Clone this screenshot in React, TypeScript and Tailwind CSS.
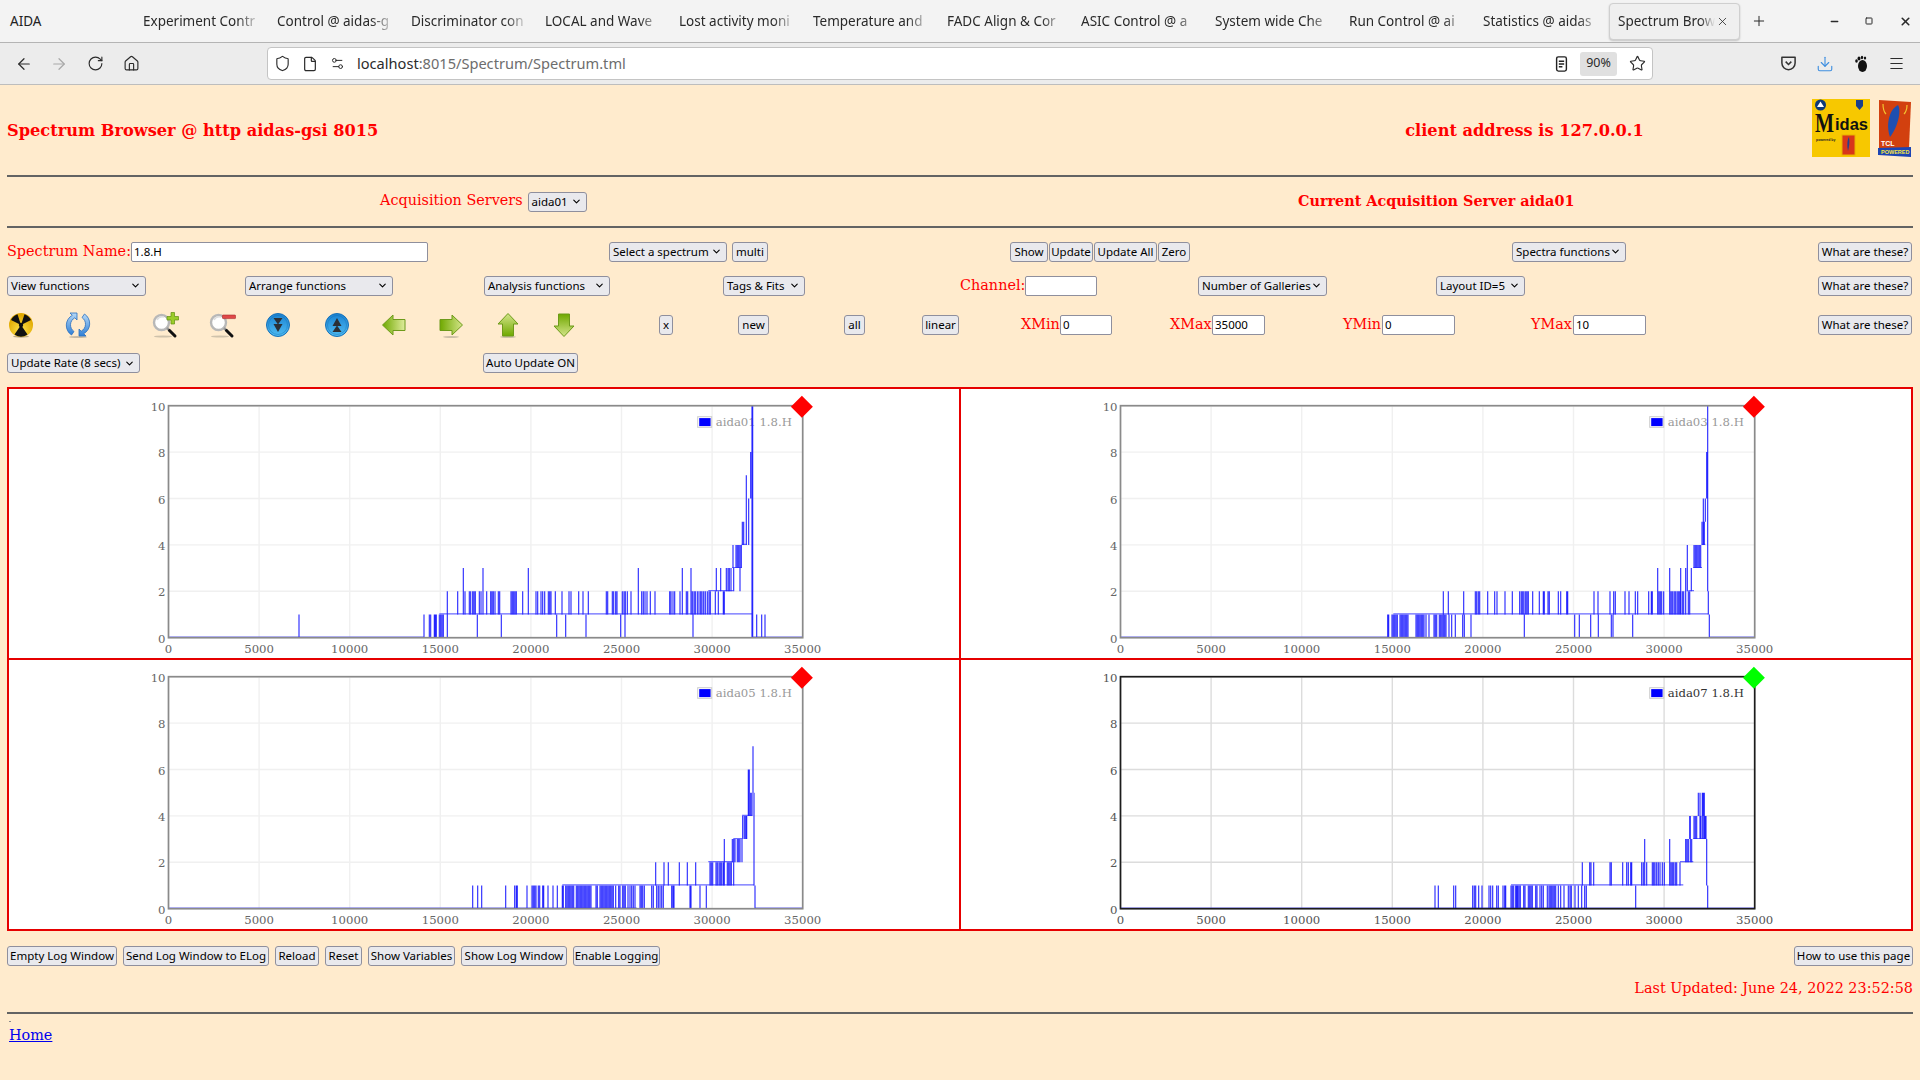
import { ArrowLeft, ArrowRight, ChevronDown, Download, File, Home, Menu, Minus, Plus, RotateCw, Settings2, Shield, Square, Star, X } from 'lucide-react';
import type { ReactNode } from 'react';

const tabs = [
  'Experiment Contr',
  'Control @ aidas-g',
  'Discriminator con',
  'LOCAL and Wave',
  'Lost activity moni',
  'Temperature and',
  'FADC Align & Cor',
  'ASIC Control @ a',
  'System wide Che',
  'Run Control @ ai',
  'Statistics @ aidas',
];

// plot box inside a chart cell, px
const PLOT = { left: 159.5, right: 793.7, top: 16.7, bottom: 248.7 };
const ly = (level: number) => PLOT.bottom - level * 23.2;

// [from level, to level, x positions measured off the plot]
type Spikes = [number, number, number[]];
type Series = { name: string; off: number; active?: boolean; base: [number, number, number][]; spikes: Spikes[] };

const charts: Series[] = [
  {
    name: 'aida01 1.8.H',
    off: 391,
    base: [[0, -694, 72], [1, 118, 1058], [2, 925, 1000], [3, 997, 1025], [4, 1025, 1040], [0, 1058, 1208]],
    spikes: [
      [0, 1, [-303, 72, 88, 92, 103, 106, 109, 118, 122, 126, 130, 1070, 1085, 1095]],
      [0, 2, [142]],
      [1, 2, [173, 195, 208, 212, 218, 222, 226, 238, 243, 260, 272, 276, 280, 285, 295, 299, 333, 337, 341, 345, 349, 368, 408, 413, 423, 428, 434, 445, 449, 453, 466, 486, 507, 513, 536, 549, 565, 619, 623, 637, 641, 647, 651, 667, 672, 676, 682, 693, 725, 730, 735, 741, 751, 765, 809, 813, 819, 824, 840, 859, 863, 877, 882, 886, 892, 897, 902, 906, 911, 916, 922, 927, 931, 946, 955, 970, 973]],
      [1, 3, [190, 249, 385, 715, 847, 873]],
      [1, 0, [232, 304, 470, 497, 558, 662, 675, 879]],
      [2, 3, [949, 962, 979, 984, 988, 993, 1001, 1020]],
      [3, 4, [999, 1008, 1012, 1016, 1020, 1024]],
      [4, 5, [1027, 1031]],
      [4, 7, [1039]],
      [4, 6, [1046]],
      [6, 8, [1052]],
      [0, 10, [1056, 1058]],
    ],
  },
  {
    name: 'aida03 1.8.H',
    off: 389,
    base: [[0, -688, 113], [1, 130, 1075], [2, 1015, 1032], [3, 1030, 1056], [4, 1056, 1066], [0, 1078, 1214]],
    spikes: [
      [0, 1, [113, 116, 126, 130, 134, 138, 142, 150, 154, 158, 162, 166, 170, 174, 198, 202, 206, 210, 214, 218, 222, 228, 237, 252, 256, 260, 268, 272, 276, 280, 284, 288, 297, 305, 316, 338, 343, 363, 1078]],
      [1, 0, [523, 674, 688, 722, 745, 784, 789, 848]],
      [1, 2, [280, 295, 341, 376, 380, 385, 389, 413, 434, 441, 465, 487, 509, 514, 518, 522, 527, 531, 535, 548, 568, 580, 583, 594, 598, 625, 632, 650, 653, 732, 744, 780, 791, 796, 825, 837, 856, 863, 896, 904, 907, 927, 931, 935, 941, 963, 967, 972, 976, 981, 985, 989, 997, 1001, 1015, 1019, 1075]],
      [1, 3, [923, 959, 992, 1007]],
      [2, 4, [1012]],
      [2, 3, [1024]],
      [3, 4, [1032, 1036, 1040, 1044, 1048, 1052]],
      [4, 5, [1056, 1060, 1063]],
      [5, 6, [1060, 1066]],
      [6, 8, [1070]],
      [2, 8, [1073]],
      [8, 10, [1073]],
    ],
  },
  {
    name: 'aida05 1.8.H',
    off: 391,
    base: [[0, -694, 710], [1, 487, 1062], [2, 925, 1000], [3, 1000, 1026], [4, 1026, 1056], [0, 1065, 1208]],
    spikes: [
      [0, 1, [218, 233, 245, 317, 344, 349, 352, 381, 396, 400, 404, 408, 415, 419, 428, 431, 444, 459, 472, 487, 490, 497, 501, 505, 509, 513, 517, 521, 529, 533, 537, 541, 545, 549, 553, 557, 561, 565, 569, 573, 588, 592, 600, 604, 608, 612, 616, 620, 624, 628, 632, 636, 640, 647, 656, 660, 668, 672, 676, 684, 690, 695, 700, 705, 720, 724, 728, 733, 755, 760, 770, 775, 780, 785, 790, 815, 819, 822, 870, 873, 900, 919, 1065]],
      [1, 2, [767, 792, 805, 838, 862, 887, 930, 934, 938, 948, 952, 957, 961, 965, 970, 982, 986, 990, 994]],
      [1, 3, [973, 1001]],
      [2, 3, [997, 1005, 1012, 1016, 1020, 1026]],
      [3, 4, [1028, 1033, 1037, 1040]],
      [4, 6, [1045, 1048]],
      [4, 5, [1052, 1056]],
      [5, 7, [1059]],
      [1, 5, [1062]],
    ],
  },
  {
    name: 'aida07 1.8.H',
    off: 389,
    active: true,
    base: [[0, -688, 1214], [1, 483, 1000], [2, 990, 1030], [3, 1030, 1068]],
    spikes: [
      [0, 1, [255, 265, 311, 317, 368, 373, 377, 386, 396, 417, 422, 428, 440, 445, 459, 464, 467, 483, 487, 491, 497, 500, 503, 507, 511, 521, 525, 535, 539, 543, 547, 557, 561, 570, 575, 580, 592, 597, 601, 605, 609, 613, 617, 625, 632, 642, 655, 660, 664, 675, 685, 695, 704, 709, 857, 1073]],
      [1, 2, [697, 719, 723, 731, 780, 784, 818, 830, 835, 842, 845, 875, 880, 890, 907, 911, 915, 920, 925, 930, 937, 943, 963, 967, 971, 976, 980, 990, 1070]],
      [1, 3, [884, 959]],
      [2, 3, [1007, 1011, 1015, 1025]],
      [2, 4, [1021]],
      [3, 4, [1019, 1032, 1036, 1040, 1050, 1053, 1058, 1062, 1065, 1068]],
      [4, 5, [1045, 1050, 1057, 1060, 1063]],
      [3, 1, [1070]],
    ],
  },
];

const Btn = ({ children, className = '' }: { children: ReactNode; className?: string }) => (
  <button className={`h-[20px] shrink-0 rounded-[3px] border border-[#8f8f9d] bg-[#e9e9ed] px-0 text-[11.5px] leading-none whitespace-nowrap text-black [font-family:'Noto_Sans',sans-serif] ${className}`}>
    {children}
  </button>
);

const Sel = ({ label, width }: { label: string; width: string }) => (
  <div className={`flex h-[20px] items-center justify-between rounded-[3px] border border-[#8f8f9d] bg-[#e9e9ed] pr-[4px] pl-[3px] text-[11.5px] whitespace-nowrap text-black [font-family:'Noto_Sans',sans-serif] ${width}`}>
    <span>{label}</span>
    <ChevronDown className="h-[11px] w-[11px] shrink-0" strokeWidth={2.4} />
  </div>
);

const Field = ({ value, width }: { value: string; width: string }) => (
  <div className={`flex h-[20px] items-center rounded-[2px] border border-[#8f8f9d] bg-white px-[2px] text-[11.5px] text-black [font-family:'Noto_Sans',sans-serif] ${width}`}>
    {value}
  </div>
);

const Chart = ({ data }: { data: Series }) => {
  const sx = (z: number) => z / 3 + data.off;
  const frame = data.active ? '#1c1c1c' : '#8a8a8a';
  const grid = data.active ? '#dcdcdc' : '#f0f0f0';
  const tick = data.active ? '#555' : '#666';
  const w = PLOT.right - PLOT.left;
  const xTicks = [0, 5000, 10000, 15000, 20000, 25000, 30000, 35000];
  const yTicks = [0, 2, 4, 6, 8, 10];
  const lines = data.spikes
    .map(([from, to, xs]) => xs.map((z) => `M${sx(z).toFixed(1)} ${ly(from).toFixed(1)}V${ly(to).toFixed(1)}`).join(''))
    .join('');
  const base = data.base
    .map(([l, a, b]) => `M${sx(a).toFixed(1)} ${(ly(l) - 0.6).toFixed(1)}H${Math.min(sx(b), PLOT.right).toFixed(1)}`)
    .join('');
  const px = PLOT.right;
  // marker sits a touch off the plot corner
  const mx = px - 0.8;
  const my = PLOT.top + 1;

  return (
    <div className="h-[271px] border-r-2 border-b-2 border-[#e60000] bg-white">
      <svg width="950" height="269" className="block [font-family:'DejaVu_Serif',serif]">
        {xTicks.map((v) => {
          const x = PLOT.left + (v / 35000) * w;
          return (
            <g key={v}>
              <line x1={x} x2={x} y1={PLOT.top} y2={PLOT.bottom} stroke={grid} strokeWidth="1.4" />
              <text x={x} y={PLOT.bottom + 15} textAnchor="middle" fontSize="11.7" fill={tick}>{v}</text>
            </g>
          );
        })}
        {yTicks.map((v) => (
          <g key={v}>
            <line x1={PLOT.left} x2={PLOT.right} y1={ly(v)} y2={ly(v)} stroke={grid} strokeWidth="1.4" />
            <text x={PLOT.left - 3} y={ly(v) + 5} textAnchor="end" fontSize="11.7" fill={tick}>{v}</text>
          </g>
        ))}
        <rect x={px - 105} y={27.7} width="14" height="10.6" fill="none" stroke="#ccc" />
        <rect x={px - 103.5} y={29.1} width="11.4" height="8" fill="#00f" />
        <text x={px - 87} y={36.5} fontSize="11.7" fill={data.active ? '#333' : '#999'}>{data.name}</text>
        <path d={base} fill="none" stroke="#6a6aff" strokeWidth="1.2" />
        <path d={lines} fill="none" stroke="#2424ff" strokeWidth="1.1" />
        <rect x={PLOT.left} y={PLOT.top} width={w} height={PLOT.bottom - PLOT.top} fill="none" stroke={frame} strokeWidth="1.7" />
        <polygon
          points={`${mx},${my - 11} ${mx + 11},${my} ${mx},${my + 11} ${mx - 11},${my}`}
          fill={data.active ? '#00ff00' : '#ff0000'}
        />
      </svg>
    </div>
  );
};

function MagIcon({ plus }: { plus?: boolean }) {
  return (
    <svg viewBox="0 0 28 28" className="h-7 w-7">
      <ellipse cx="12" cy="25.5" rx="9" ry="1" fill="#cfc2ab" />
      <circle cx="10.5" cy="11.5" r="7.5" fill="#fff" stroke="#b8b8b8" strokeWidth="2.4" />
      <path d="M6 9a6 6 0 0 1 7-3" stroke="#ddd" strokeWidth="1.5" fill="none" />
      <path d="M16 17l3 3" stroke="#999" strokeWidth="2.5" />
      <path d="M18.5 19.5l5.5 5.5" stroke="#111" strokeWidth="3" strokeLinecap="round" />
      {plus ? (
        <path d="M20 1.5h3.5v4h4v3.5h-4v4H20v-4h-4V5.5h4Z" fill="#9ccc2a" stroke="#5f8f10" strokeWidth=".7" />
      ) : (
        <rect x="14.5" y="4" width="13" height="3.6" rx=".6" fill="#e04848" stroke="#a82c2c" strokeWidth=".6" />
      )}
    </svg>
  );
}

function RoundIcon({ id, flip }: { id: string; flip?: boolean }) {
  return (
    <svg viewBox="0 0 28 28" className="h-7 w-7">
      <defs>
        <linearGradient id={id} x1="0" y1="0" x2="0" y2="1"><stop offset="0" stopColor="#1a82d2" /><stop offset="1" stopColor="#4fbcf2" /></linearGradient>
      </defs>
      <circle cx="14" cy="14" r="11.5" fill={`url(#${id})`} stroke="#1670b8" />
      <circle cx="14" cy="14" r="9.5" fill="none" stroke="#0f64a8" strokeWidth=".6" opacity=".6" />
      <g transform={flip ? 'rotate(180 14 14)' : undefined} fill="#2b2f36">
        <path d="M9.5 7h9L14 13.5Z" />
        <path d="M9.5 13h9L14 21Z" />
      </g>
    </svg>
  );
}

function GreenArrow({ id, rotate }: { id: string; rotate: number }) {
  const tipDark = rotate === -90;
  return (
    <svg viewBox="0 0 28 28" className="h-7 w-7">
      <defs>
        <linearGradient id={id} x1="0" y1="0" x2="0" y2="1">
          <stop offset="0" stopColor={tipDark ? '#6fa800' : '#d4e58a'} />
          <stop offset="1" stopColor={tipDark ? '#e0ec9c' : '#6fa800'} />
        </linearGradient>
      </defs>
      <ellipse cx="14" cy="26" rx="8" ry=".9" fill="#cdbfa8" opacity={rotate === 180 || rotate === -90 ? 0 : 1} />
      <g transform={`rotate(${rotate} 14 14)`}>
        <path d="M14 2.5L24 13H19.5V25H8.5V13H4Z" fill={`url(#${id})`} stroke="#6d9a1a" strokeWidth="1" strokeLinejoin="round" />
      </g>
    </svg>
  );
}

const icons: ReactNode[] = [
  // radiation
  <svg key="rad" viewBox="0 0 28 28" className="h-7 w-7">
    <defs>
      <radialGradient id="ry" cx="50%" cy="70%" r="60%"><stop offset="0" stopColor="#ffe24a" /><stop offset="1" stopColor="#e0a800" /></radialGradient>
    </defs>
    <ellipse cx="14" cy="25.5" rx="8" ry="1.2" fill="#b9a98f" />
    <circle cx="14" cy="14" r="12" fill="url(#ry)" />
    <path d="M14 14 L4 9 A11.4 11.4 0 0 1 10.5 3.2Z M14 14 L17.5 3.2 A11.4 11.4 0 0 1 24 9Z M14 14 L20.5 23.4 A11.4 11.4 0 0 1 7.5 23.4Z" fill="#111" />
    <circle cx="14" cy="14" r="2.2" fill="#111" />
  </svg>,
  // refresh
  <svg key="refresh" viewBox="0 0 28 28" className="h-7 w-7">
    <defs>
      <linearGradient id="rb" x1="0" y1="0" x2="0" y2="1"><stop offset="0" stopColor="#b5d8f7" /><stop offset="1" stopColor="#2f7fd6" /></linearGradient>
    </defs>
    <ellipse cx="14" cy="26" rx="9" ry="1" fill="#c9bba4" />
    <path d="M6 2h7v7l-2.2-2.2A8 8 0 0 0 10 20.5L7.5 24A11.500 11.500 0 0 1 8.300 4.300Z" fill="url(#rb)" stroke="#2a6fbe" strokeWidth=".8" />
    <path d="M22 25h-7v-7l2.2 2.2A8 8 0 0 0 18 6.5L20.5 3A11.500 11.500 0 0 1 19.700 22.700Z" fill="url(#rb)" stroke="#2a6fbe" strokeWidth=".8" />
  </svg>,
  <MagIcon key="zin" plus />,
  <MagIcon key="zout" />,
  <RoundIcon key="dn" id="rd" />,
  <RoundIcon key="up" id="ru" flip />,
  <GreenArrow key="l" id="gl" rotate={-90} />,
  <GreenArrow key="r" id="gr" rotate={90} />,
  <GreenArrow key="u" id="gu" rotate={0} />,
  <GreenArrow key="d" id="gd" rotate={180} />,
];

const MidasLogo = () => (
  <svg viewBox="0 0 58 58" className="h-[58px] w-[58px]">
    <rect width="58" height="58" fill="#f7c800" />
    <circle cx="8.5" cy="6" r="5.5" fill="#0d3a78" />
    <path d="M8.5 2.5L12 8H5Z" fill="#fff" />
    <path d="M44 1h7v6l-3.5 4-3.5-4Z" fill="#1a3f8c" />
    <text x="3" y="33" fontSize="28" fontWeight="700" fill="#111" textLength="19" lengthAdjust="spacingAndGlyphs" className="[font-family:'Liberation_Serif',serif]">M</text>
    <text x="23" y="31" fontSize="16" fontWeight="700" fill="#111" textLength="33" lengthAdjust="spacingAndGlyphs" className="[font-family:'Liberation_Sans',sans-serif]">idas</text>
    <text x="4" y="42" fontSize="3.5" fontWeight="700" fill="#222" className="[font-family:'Liberation_Sans',sans-serif]">powered by</text>
    <rect x="30" y="36" width="13" height="20" fill="#d8361a" stroke="#e8b000" />
    <path d="M37 38c-2 3-2 9-1 14 1-4 2-9 1-14Z" fill="#23408f" />
  </svg>
);

const TclLogo = () => (
  <svg viewBox="0 0 36 58" className="h-[58px] w-[36px]">
    <path d="M2 1l32 2-2 46H2Z" fill="#d2400f" />
    <path d="M1 49l33-1v10l-33-2Z" fill="#1c44b4" />
    <path d="M21 6c4 6-1 24-8 32-2-6-3-14 0-22 2-6 5-8 8-10Z" fill="#1f4fb0" />
    <path d="M6 5c0 5 1 8 3 10M30 6c0 4-1 7-3 9" stroke="#f2c230" strokeWidth="1.2" fill="none" />
    <text x="4" y="47" fontSize="7" fontWeight="700" fill="#fff" className="[font-family:'Liberation_Sans',sans-serif]">TCL</text>
    <text x="4" y="55" fontSize="5.5" fontWeight="700" fill="#f5e642" className="[font-family:'Liberation_Sans',sans-serif]">POWERED</text>
  </svg>
);

const Label = ({ children, className = '' }: { children: ReactNode; className?: string }) => (
  <span className={`text-[14.4px] whitespace-nowrap text-[#ff0000] ${className}`}>{children}</span>
);

export default function App() {
  return (
    <div className="flex h-[1080px] w-[1920px] flex-col overflow-hidden bg-[#ffebcd] [font-family:'DejaVu_Serif',serif]">
      {/* tab bar */}
      <div className="flex h-[43px] items-center border-b border-[#b4b4b4] bg-[#f3f3f3] text-[13.5px] text-[#2a2a2a] [font-family:'Noto_Sans',sans-serif]">
        <span className="w-[135px] shrink-0 pl-[10px] text-[#222]">AIDA</span>
        {tabs.map((t) => (
          <span key={t} className="w-[134px] shrink-0 pr-[8px] pl-[8px] whitespace-nowrap">
            <span className="block [mask-image:linear-gradient(to_right,black_80%,transparent)]">{t}</span>
          </span>
        ))}
        <div className="flex h-[37px] w-[131px] shrink-0 items-center justify-between rounded-[4px] border border-[#cfcfcf] bg-[#efefef] pr-[10px] pl-[8px] whitespace-nowrap shadow-[0_1px_2px_rgba(0,0,0,0.2)]">
          <span className="[mask-image:linear-gradient(to_right,black_85%,transparent)]">Spectrum Brow</span>
          <X className="h-[13px] w-[13px] shrink-0" strokeWidth={1.5} />
        </div>
        <Plus className="ml-[11px] h-[16px] w-[16px]" strokeWidth={1.5} />
        <Minus className="ml-[62px] h-[11px] w-[11px]" strokeWidth={3} />
        <Square className="ml-[24.5px] h-[8px] w-[8px]" strokeWidth={3} />
        <X className="ml-[26px] h-[13px] w-[13px]" strokeWidth={3} />
      </div>

      {/* address bar */}
      <div className="flex h-[42px] items-center border-b border-[#bdbdbd] bg-[#ececec] text-[#2b2b2b]">
        <ArrowLeft className="ml-[15px] h-[18px] w-[18px]" strokeWidth={1.6} />
        <ArrowRight className="ml-[17px] h-[18px] w-[18px] text-[#a8a8a8]" strokeWidth={1.6} />
        <RotateCw className="ml-[19px] h-[17px] w-[17px]" strokeWidth={1.6} />
        <Home className="ml-[19px] h-[17px] w-[17px]" strokeWidth={1.6} />
        <div className="ml-[127px] flex h-[33px] w-[1386px] items-center rounded-[4px] border border-[#c4c4c4] bg-white text-[14.6px] [font-family:'Noto_Sans',sans-serif]">
          <Shield className="ml-[6px] h-[17px] w-[17px]" strokeWidth={1.6} />
          <File className="ml-[11px] h-[16px] w-[16px]" strokeWidth={1.8} />
          <Settings2 className="ml-[12px] h-[15px] w-[15px]" strokeWidth={1.6} />
          <span className="ml-[12px]">localhost</span>
          <span className="text-[#6d6d6d]">:8015/Spectrum/Spectrum.tml</span>
          <div className="ml-auto flex items-center">
            <svg viewBox="0 0 14 18" className="h-[16px] w-[13px]" fill="none" stroke="#222" strokeWidth="1.6">
              <rect x="1.5" y="1" width="11" height="16" rx="2" />
              <path d="M4 6h6M4 9h6M4 12h4" />
            </svg>
            <span className="mx-[12px] flex h-[24px] w-[37px] items-center justify-center rounded-[3px] bg-[#e0e0e0] text-[12.5px]">90%</span>
            <Star className="mr-[6px] h-[17px] w-[17px]" strokeWidth={1.6} />
          </div>
        </div>
        <svg viewBox="0 0 18 18" className="ml-[127px] h-[17px] w-[17px]" fill="none" stroke="#333" strokeWidth="1.6">
          <path d="M2 2.5h14v6a7 7 0 0 1-14 0Z" strokeLinejoin="round" />
          <path d="M6 7l3 3 3-3" />
        </svg>
        <Download className="ml-[19px] h-[18px] w-[18px] text-[#3f8fe0]" strokeWidth={1.5} />
        <svg viewBox="0 0 18 18" className="ml-[18px] h-[18px] w-[18px]" fill="#111">
          <ellipse cx="10.5" cy="11" rx="4.5" ry="6" />
          <ellipse cx="7" cy="3.5" rx="1.5" ry="2" />
          <ellipse cx="10" cy="2.5" rx="1.2" ry="1.8" />
          <ellipse cx="13" cy="3" rx="1.2" ry="1.6" />
          <ellipse cx="4.5" cy="6" rx="1.3" ry="1.7" />
        </svg>
        <Menu className="ml-[18px] h-[17px] w-[17px]" strokeWidth={1.6} />
      </div>

      {/* page */}
      <div className="flex flex-col px-[7px]">
        <div className="flex h-[90px] items-center">
          <h1 className="w-[1399px] pt-[2px] text-[16.2px] font-bold text-[#ff0000]">Spectrum Browser @ http aidas-gsi 8015</h1>
          <span className="w-[407px] pt-[2px] text-[16.2px] font-bold text-[#ff0000]">client address is 127.0.0.1</span>
          <div className="-mt-[4px] flex items-center gap-[7px]">
            <MidasLogo />
            <TclLogo />
          </div>
        </div>
        <div className="h-[2px] bg-[#636363]" />

        <div className="grid h-[49px] grid-cols-[373px_918px_auto] items-center">
          <span />
          <div className="flex items-center gap-[5px]">
            <Label className="-mt-[2px]">Acquisition Servers</Label>
            <Sel label="aida01" width="w-[59px]" />
          </div>
          <span className="-mt-[2px] text-[14.4px] font-bold text-[#ff0000]">Current Acquisition Server aida01</span>
        </div>
        <div className="h-[2px] bg-[#636363]" />

        <div className="mt-[13px] grid h-[20px] grid-cols-[602px_401px_502px_306px_auto] items-center">
          <div className="flex items-center">
            <Label className="w-[124px]">Spectrum Name:</Label>
            <Field value="1.8.H" width="w-[297px]" />
          </div>
          <div className="flex items-center gap-[5px]">
            <Sel label="Select a spectrum" width="w-[118px]" />
            <Btn className="w-[36px]">multi</Btn>
          </div>
          <div className="flex items-center gap-[1px]">
            <Btn className="w-[38px]">Show</Btn>
            <Btn className="w-[44px]">Update</Btn>
            <Btn className="w-[63px]">Update All</Btn>
            <Btn className="w-[32px]">Zero</Btn>
          </div>
          <Sel label="Spectra functions" width="w-[114px]" />
          <Btn className="w-[94px]">What are these?</Btn>
        </div>

        <div className="mt-[14px] grid h-[20px] grid-cols-[238px_239px_239px_237px_238px_238px_382px_auto] items-center">
          <Sel label="View functions" width="w-[139px]" />
          <Sel label="Arrange functions" width="w-[148px]" />
          <Sel label="Analysis functions" width="w-[126px]" />
          <Sel label="Tags & Fits" width="w-[82px]" />
          <div className="flex items-center">
            <Label className="w-[65px]">Channel:</Label>
            <Field value="" width="w-[72px]" />
          </div>
          <Sel label="Number of Galleries" width="w-[129px]" />
          <Sel label="Layout ID=5" width="w-[89px]" />
          <Btn className="w-[94px]">What are these?</Btn>
        </div>

        <div className="mt-[16px] grid h-[28px] grid-cols-[57px_86.5px_57px_56px_59px_57px_57px_57.5px_55.5px_109.5px_79px_106px_78px_99px_149px_173px_188px_287px_auto] items-center">
          {icons.map((icon, i) => (
            <div key={i} className="h-7 w-7">{icon}</div>
          ))}
          <Btn className="w-[14px]">x</Btn>
          <Btn className="w-[31px]">new</Btn>
          <Btn className="w-[21px]">all</Btn>
          <Btn className="w-[37px]">linear</Btn>
          <div className="flex items-center">
            <Label className="w-[39px]">XMin</Label>
            <Field value="0" width="w-[52px]" />
          </div>
          <div className="flex items-center">
            <Label className="w-[42px]">XMax</Label>
            <Field value="35000" width="w-[53px]" />
          </div>
          <div className="flex items-center">
            <Label className="w-[39px]">YMin</Label>
            <Field value="0" width="w-[73px]" />
          </div>
          <div className="flex items-center">
            <Label className="w-[42px]">YMax</Label>
            <Field value="10" width="w-[73px]" />
          </div>
          <Btn className="w-[94px]">What are these?</Btn>
        </div>

        <div className="mt-[14px] grid h-[20px] grid-cols-[476px_auto] items-center">
          <Sel label="Update Rate (8 secs)" width="w-[133px]" />
          <Btn className="w-[95px]">Auto Update ON</Btn>
        </div>

        <div className="mt-[14px] grid grid-cols-2 border-t-2 border-l-2 border-[#e60000]">
          {charts.map((c) => (
            <Chart key={c.name} data={c} />
          ))}
        </div>

        <div className="mt-[15px] flex h-[20px] items-center">
          <div className="flex gap-[6px]">
            <Btn className="w-[110px]">Empty Log Window</Btn>
            <Btn className="w-[146px]">Send Log Window to ELog</Btn>
            <Btn className="w-[44px]">Reload</Btn>
            <Btn className="w-[37px]">Reset</Btn>
            <Btn className="w-[87px]">Show Variables</Btn>
            <Btn className="w-[106px]">Show Log Window</Btn>
            <Btn className="w-[87px]">Enable Logging</Btn>
          </div>
          <Btn className="ml-auto w-[119px]">How to use this page</Btn>
        </div>

        <div className="mt-[12.5px] flex h-[20px] items-center justify-end">
          <Label>Last Updated: June 24, 2022 23:52:58</Label>
        </div>
        <div className="mt-[13px] h-[2px] bg-[#636363]" />
        <div className="mt-[7px] ml-[2px] h-[1px] w-[2px] bg-[#8a8a8a]" />
        <a href="#" className="mt-[4px] ml-[2px] w-fit text-[14.4px] leading-[18px] text-[#0000ee] underline">Home</a>
      </div>
    </div>
  );
}
